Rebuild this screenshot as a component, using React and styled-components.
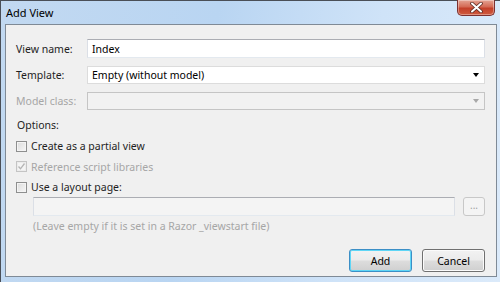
import React from "react";
import styled, { createGlobalStyle } from "styled-components";

const GlobalStyle = createGlobalStyle`
  html, body {
    margin: 0;
    padding: 0;
    background: #ffffff;
  }
  body {
    font-family: "Noto Sans", "Open Sans", "DejaVu Sans", sans-serif;
    font-size: 10.5px;
    color: #1e1e1e;
  }
`;

const Window = styled.div`
  width: 500px;
  height: 282px;
  box-sizing: border-box;
  display: flex;
  flex-direction: column;
  border-top: 1px solid #4a4f57;
  border-left: 1px solid #4a4f57;
  background: linear-gradient(100deg, #c2d9f1 0%, #b9d5f2 40%, #cfe3f8 70%, #dbeafa 100%);
  padding: 0 3px 5px 4px;
`;

const TitleBar = styled.div`
  height: 23px;
  display: flex;
  align-items: flex-start;
  justify-content: space-between;
`;

const Title = styled.div`
  padding: 4px 0 0 1px;
  font-size: 11px;
  color: #000;
`;

const CloseButton = styled.div`
  width: 38px;
  height: 16px;
  margin-top: -1px;
  margin-right: 2px;
  box-sizing: border-box;
  border: 1px solid #7c3030;
  border-top: none;
  border-radius: 0 0 5px 5px;
  background: linear-gradient(180deg, #e4a494 0%, #d46a55 45%, #c3402a 55%, #cf5a3e 100%);
  display: flex;
  align-items: center;
  justify-content: center;
  box-shadow: inset 0 0 0 1px rgba(255, 255, 255, 0.35);
`;

const Client = styled.div`
  flex: 1;
  box-sizing: border-box;
  border: 1px solid #7f8a96;
  background: #f0f0f0;
  padding: 14px 11px 4px 10px;
  display: flex;
  flex-direction: column;
`;

const FieldRow = styled.div`
  display: grid;
  grid-template-columns: 71px 1fr;
  align-items: center;
  height: 19px;
  margin-bottom: ${(p) => p.gap || 7}px;
`;

const Label = styled.div`
  color: ${(p) => (p.disabled ? "#a6a6a6" : "#1e1e1e")};
  white-space: nowrap;
`;

const TextBox = styled.div`
  height: ${(p) => p.h || 19}px;
  box-sizing: border-box;
  border: 1px solid #dbdfe6;
  border-top-color: #abadb3;
  border-bottom-color: #e3e9ef;
  background: ${(p) => (p.disabled ? "#f4f4f4" : "#ffffff")};
  display: flex;
  align-items: center;
  padding-left: 4px;
  color: #000;
`;

const Combo = styled.div`
  height: 18px;
  box-sizing: border-box;
  border: 1px solid ${(p) => (p.disabled ? "#c5c5c5" : "#dcdcdc")};
  background: ${(p) => (p.disabled ? "#f2f2f2" : "#ffffff")};
  display: flex;
  align-items: center;
  justify-content: space-between;
  padding: 0 4px 0 4px;
  color: #000;
`;

const Arrow = styled.div`
  width: 0;
  height: 0;
  border-left: 3.5px solid transparent;
  border-right: 3.5px solid transparent;
  border-top: 4px solid ${(p) => (p.disabled ? "#a8a8a8" : "#000")};
  margin-right: 1px;
`;

const Section = styled.div`
  margin: 1px 0 2px 1px;
  height: 18px;
  display: flex;
  align-items: center;
`;

const CheckRow = styled.label`
  display: flex;
  align-items: center;
  gap: 4px;
  height: 20.5px;
  color: ${(p) => (p.disabled ? "#a6a6a6" : "#1e1e1e")};
`;

const Box = styled.span`
  width: 11px;
  height: 11px;
  box-sizing: border-box;
  border: 1px solid ${(p) => (p.disabled ? "#c4c4c4" : "#8e8f8f")};
  background: ${(p) =>
    p.disabled
      ? "#f4f4f4"
      : "linear-gradient(135deg, #dcdcdc 0%, #f6f6f6 100%)"};
  box-shadow: inset 0 0 0 1px ${(p) => (p.disabled ? "#ececec" : "#f4f4f4")};
  display: flex;
  align-items: center;
  justify-content: center;
`;

const LayoutRow = styled.div`
  display: flex;
  gap: 8px;
  margin: -1px 0 0 17px;
`;

const SmallButton = styled.div`
  width: 22px;
  height: 19px;
  box-sizing: border-box;
  border: 1px solid #c8c8c8;
  border-radius: 3px;
  background: #f4f4f4;
  color: #a0a0a0;
  display: flex;
  align-items: center;
  justify-content: center;
  font-size: 10px;
  line-height: 1;
  padding-bottom: 3px;
`;

const Hint = styled.div`
  margin: 3px 0 0 17px;
  color: #a6a6a6;
`;

const Footer = styled.div`
  margin-top: auto;
  display: flex;
  justify-content: flex-end;
  gap: 10px;
`;

const Button = styled.div`
  width: 63px;
  height: 23px;
  box-sizing: border-box;
  border: 1px solid ${(p) => (p.primary ? "#3c8fc6" : "#707070")};
  border-radius: 3px;
  background: linear-gradient(180deg, #f2f2f2 0%, #ebebeb 48%, #dddddd 52%, #cfcfcf 100%);
  box-shadow: inset 0 0 0 1px ${(p) => (p.primary ? "#5fd6f6" : "#fbfbfb")};
  display: flex;
  align-items: center;
  justify-content: center;
  color: #000;
`;

const Layout = styled.div`
  flex: 1;
`;

export default function App() {
  return (
    <>
      <GlobalStyle />
      <Window>
        <TitleBar>
          <Title>Add View</Title>
          <CloseButton>
            <svg width="13" height="11" viewBox="0 0 13 11">
              <path
                d="M2 1.5 L11 9.5 M11 1.5 L2 9.5"
                stroke="#5a2a22"
                strokeWidth="3.6"
                strokeLinecap="round"
              />
              <path
                d="M2 1.5 L11 9.5 M11 1.5 L2 9.5"
                stroke="#ffffff"
                strokeWidth="2"
                strokeLinecap="round"
              />
            </svg>
          </CloseButton>
        </TitleBar>
        <Client>
          <FieldRow>
            <Label>View name:</Label>
            <TextBox>Index</TextBox>
          </FieldRow>
          <FieldRow>
            <Label>Template:</Label>
            <Combo>
              Empty (without model)
              <Arrow />
            </Combo>
          </FieldRow>
          <FieldRow gap={5}>
            <Label disabled>Model class:</Label>
            <Combo disabled>
              <span />
              <Arrow disabled />
            </Combo>
          </FieldRow>
          <Section>Options:</Section>
          <CheckRow>
            <Box />
            Create as a partial view
          </CheckRow>
          <CheckRow disabled>
            <Box disabled>
              <svg width="9" height="9" viewBox="0 0 9 9">
                <path
                  d="M1.5 4.5 L3.5 6.8 L7.5 1.5"
                  fill="none"
                  stroke="#b4b4b4"
                  strokeWidth="1.3"
                />
              </svg>
            </Box>
            Reference script libraries
          </CheckRow>
          <CheckRow>
            <Box />
            Use a layout page:
          </CheckRow>
          <LayoutRow>
            <Layout>
              <TextBox disabled />
            </Layout>
            <SmallButton>...</SmallButton>
          </LayoutRow>
          <Hint>(Leave empty if it is set in a Razor _viewstart file)</Hint>
          <Footer>
            <Button primary>Add</Button>
            <Button>Cancel</Button>
          </Footer>
        </Client>
      </Window>
    </>
  );
}
